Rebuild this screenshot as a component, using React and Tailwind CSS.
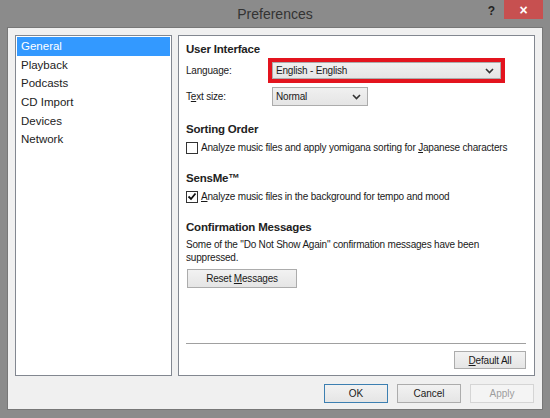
import React, { useState } from "react";

const font = "font-['Liberation_Sans',Arial,sans-serif]";

const pages = ["General", "Playback", "Podcasts", "CD Import", "Devices", "Network"];

const Chevron = ({ className = "" }) => (
  <svg width="9" height="6" viewBox="0 0 9 6" className={className}>
    <path d="M1 1 L4.5 4.5 L8 1" fill="none" stroke="#333" strokeWidth="1.6" />
  </svg>
);

const Combo = ({ value, className = "" }) => (
  <div
    className={`flex items-center justify-between border border-[#acacac] bg-gradient-to-b from-[#f0f0f0] to-[#e5e5e5] pl-[3px] pr-[6px] text-[10px] text-[#1a1a1a] ${className}`}
  >
    <span>{value}</span>
    <Chevron />
  </div>
);

const Check = ({ checked }) => (
  <div className="flex h-[12px] w-[12px] shrink-0 items-center justify-center border border-[#333] bg-white">
    {checked && (
      <svg width="10" height="9" viewBox="0 0 10 9">
        <path d="M1.5 4.5 L4 7 L8.5 1.5" fill="none" stroke="#111" strokeWidth="1.8" />
      </svg>
    )}
  </div>
);

const Button = ({ children, className = "", disabled, primary }) => (
  <div
    className={`flex items-center justify-center border text-[10px] ${
      disabled
        ? "border-[#d5d5d5] bg-[#f4f4f4] text-[#9d9d9d]"
        : primary
        ? "border-[#3c7fb1] bg-gradient-to-b from-[#f2f2f2] to-[#e5e5e5] text-[#1a1a1a]"
        : "border-[#acacac] bg-gradient-to-b from-[#f2f2f2] to-[#e5e5e5] text-[#1a1a1a]"
    } ${className}`}
  >
    <span>{children}</span>
  </div>
);

const Heading = ({ children, className = "" }) => (
  <div className={`h-[16px] text-[11.5px] leading-[16px] font-bold text-[#222] ${className}`}>
    {children}
  </div>
);

const App = () => {
  const [active, setActive] = useState(0);

  return (
    <div className={`flex h-[418px] w-[550px] flex-col bg-[#8b8b8b] px-[7px] pb-[8px] ${font}`}>
      {/* Title bar */}
      <div className="grid h-[27px] grid-cols-[1fr_auto_1fr]">
        <div />
        <div className="pt-[5px] text-[14px] leading-[18px] text-[#333]">Preferences</div>
        <div className="flex items-start justify-end">
          <div className="mr-[9px] mt-[2px] text-[12px] font-bold text-[#222]">?</div>
          <div className="flex h-[19px] w-[39px] items-center justify-center bg-[#c75050] text-[14px] font-bold leading-none text-white">
            ×
          </div>
        </div>
      </div>

      {/* Client area */}
      <div className="flex h-[383px] flex-col border border-[#777] bg-[#f0f0f0] px-[7px] pt-[7px]">
        <div className="flex h-[341px] gap-[6px]">
          {/* Page list */}
          <div className="flex w-[157px] flex-col border border-[#828790] bg-white p-px">
            {pages.map((p, i) => (
              <div
                key={p}
                onClick={() => setActive(i)}
                className={`h-[18.7px] pl-[4px] text-[11.5px] leading-[18.7px] ${
                  active === i ? "bg-[#3399ff] text-white" : "text-[#222]"
                }`}
              >
                {p}
              </div>
            ))}
          </div>

          {/* Settings panel */}
          <div className="flex flex-1 flex-col border border-[#828790] bg-white pb-[6px] pl-[7px] pr-[8px] pt-[5px] text-[10px] tracking-[-0.2px] text-[#1a1a1a]">
            <Heading>User Interface</Heading>
            <div className="mt-px flex h-[25px] items-center">
              <span className="w-[82px]">Language:</span>
              <div className="flex h-[25px] w-[237px] border-[4px] border-[#e3141e]">
                <Combo value="English - English" className="flex-1" />
              </div>
            </div>
            <div className="mt-[4px] flex h-[19px] items-center">
              <span className="w-[86px]">
                T<span className="underline">e</span>xt size:
              </span>
              <Combo value="Normal" className="h-[19px] w-[96px]" />
            </div>

            <Heading className="mt-[15px]">Sorting Order</Heading>
            <div className="mt-[3px] flex h-[15px] items-center gap-[3px]">
              <Check />
              <span>
                Analyze music files and apply yomigana sorting for{" "}
                <span className="underline">J</span>apanese characters
              </span>
            </div>

            <Heading className="mt-[15px]">SensMe™</Heading>
            <div className="mt-[3px] flex h-[15px] items-center gap-[3px]">
              <Check checked />
              <span>
                <span className="underline">A</span>nalyze music files in the background for tempo and mood
              </span>
            </div>

            <Heading className="mt-[15px]">Confirmation Messages</Heading>
            <p className="mt-[3px] w-[300px] leading-[13px]">
              Some of the "Do Not Show Again" confirmation messages have been suppressed.
            </p>
            <Button className="ml-px mt-[5px] h-[19px] w-[110px]">
              Reset <span className="underline">M</span>essages
            </Button>

            <div className="flex-1" />
            <div className="h-px bg-[#a0a0a0]" />
            <div className="mt-[7px] flex justify-end">
              <Button className="h-[18px] w-[72px]">
                <span className="underline">D</span>efault All
              </Button>
            </div>
          </div>
        </div>

        {/* Dialog buttons */}
        <div className="mt-[8px] flex justify-end gap-[9px] pr-px">
          <Button primary className="h-[19px] w-[64px]">OK</Button>
          <Button className="h-[19px] w-[64px]">Cancel</Button>
          <Button disabled className="h-[19px] w-[64px]">Apply</Button>
        </div>
      </div>
    </div>
  );
};

export default App;
